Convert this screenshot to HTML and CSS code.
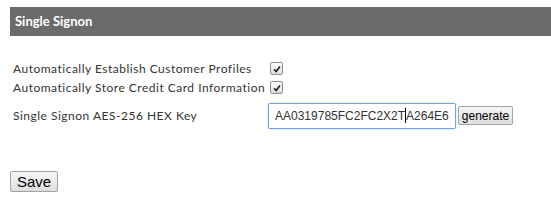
FILE: index.html
```html
<!DOCTYPE html>
<html>
<head>
<meta charset="utf-8">
<link rel="stylesheet" href="styles.css">
</head>
<body>
<div class="panel">
  <div class="panel-head">Single Signon</div>
  <div class="form">
    <div class="row">
      <span class="label">Automatically Establish Customer Profiles</span>
      <span class="check"><svg viewBox="0 0 12 12" width="12" height="12"><path d="M2.5 6.5 L5 9 L9.5 3" fill="none" stroke="#222" stroke-width="2"/></svg></span>
    </div>
    <div class="row">
      <span class="label">Automatically Store Credit Card Information</span>
      <span class="check"><svg viewBox="0 0 12 12" width="12" height="12"><path d="M2.5 6.5 L5 9 L9.5 3" fill="none" stroke="#222" stroke-width="2"/></svg></span>
    </div>
    <div class="row key-row">
      <span class="label">Single Signon AES-256 HEX Key</span>
      <div class="key-input">AA0319785FC2FC2X2T<span class="caret"></span>A264E6</div>
      <button class="btn gen">generate</button>
    </div>
  </div>
  <button class="btn save">Save</button>
</div>
</body>
</html>
```

FILE: styles.css
```css
html, body { margin: 0; padding: 0; background: #fff; }
body { padding: 7px 0 0 10px; font-family: Lato, "Open Sans", sans-serif; }
.panel-head {
  background: #6b6b6b;
  color: #fff;
  font-weight: bold;
  font-size: 13px;
  height: 29px;
  line-height: 29px;
  padding-left: 5px;
}
.form { padding: 23px 0 0 3px; display: flex; flex-direction: column; }
.row { display: flex; align-items: center; height: 19px; color: #333; font-size: 12px; letter-spacing: 0.5px; }
.label { width: 256px; white-space: nowrap; }
.check {
  width: 11px; height: 11px;
  border: 1px solid #8f8f8f;
  border-radius: 2px;
  background: linear-gradient(#fdfdfd, #dcdcdc);
  display: flex; align-items: center; justify-content: center;
  margin-left: 1px;
}
.check svg { width: 10px; height: 10px; }
.key-row { height: 27px; margin-top: 5px; }
.key-input {
  box-sizing: border-box;
  width: 188px; height: 26px;
  border: 1px solid #7aa3da;
  border-radius: 2px;
  box-shadow: 0 0 2px #a9c6ee;
  font-family: "Liberation Sans", Arial, sans-serif;
  font-size: 12px;
  letter-spacing: 0;
  color: #333;
  padding: 0 6px;
  line-height: 24px;
  margin-left: -1px;
  white-space: nowrap;
}
.caret { display: inline-block; width: 1px; height: 15px; background: #000; vertical-align: -3px; }
.btn {
  font-family: "Liberation Sans", Arial, sans-serif;
  color: #000;
  border: 1px solid #a3a3a3;
  border-radius: 2px;
  background: linear-gradient(#f6f6f6, #dedede);
  padding: 0;
}
.gen { font-size: 12px; height: 19px; width: 55px; margin-left: 2px; letter-spacing: 0; }
.save { font-size: 15px; height: 21px; width: 48px; margin-top: 42px; display: block; }
```
